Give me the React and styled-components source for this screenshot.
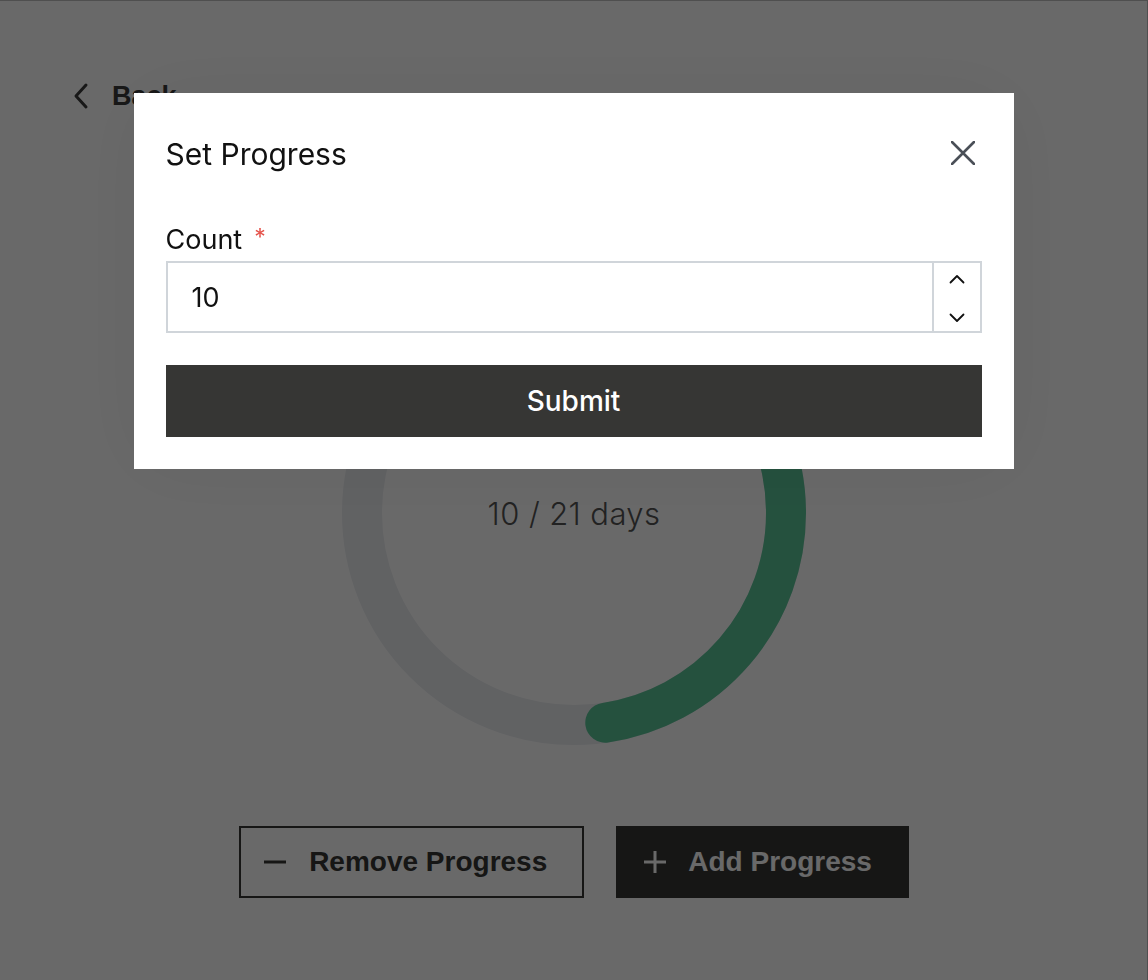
import React from "react";
import styled, { createGlobalStyle } from "styled-components";

const GlobalStyle = createGlobalStyle`
  html, body { margin: 0; padding: 0; background: #ffffff; }
  body { font-family: Inter, "Noto Sans", sans-serif; color: #111; }
  * { box-sizing: border-box; }
`;

const Page = styled.main`
  min-height: 980px;
  padding: 80px 72px 0;
  display: flex;
  flex-direction: column;
`;

const BackLink = styled.a`
  display: flex;
  align-items: center;
  gap: 22px;
  height: 32px;
  font-family: "Liberation Sans", Arial, sans-serif;
  font-weight: 700;
  font-size: 27px;
  color: #3a3a3a;
  text-decoration: none;
`;

const RingWrap = styled.div`
  position: relative;
  align-self: center;
  width: 464px;
  height: 464px;
  margin-top: 169px;
`;

const RingLabel = styled.div`
  position: absolute;
  inset: 0;
  display: flex;
  align-items: center;
  justify-content: center;
  font-family: Inter, sans-serif;
  font-weight: 300;
  font-size: 31px;
  letter-spacing: 0.4px;
  color: #535353;
`;

const ActionRow = styled.div`
  display: flex;
  justify-content: center;
  gap: 32px;
  margin-top: 81px;
`;

const ActionButton = styled.button`
  display: flex;
  align-items: center;
  gap: ${(p) => (p.$filled ? "21px" : "22px")};
  height: 72px;
  padding: ${(p) => (p.$filled ? "0 35px 0 25px" : "0 35px 0 22px")};
  font-family: "Liberation Sans", Arial, sans-serif;
  font-weight: 700;
  font-size: 28px;
  border: 2px solid #363634;
  background: ${(p) => (p.$filled ? "#363634" : "#ffffff")};
  color: ${(p) => (p.$filled ? "#ffffff" : "#363634")};
  cursor: pointer;
`;

const Overlay = styled.div`
  position: fixed;
  inset: 0;
  background: rgba(0, 0, 0, 0.59);
  border-top: 1px solid rgba(0, 0, 0, 0.25);
  border-right: 1px solid rgba(0, 0, 0, 0.25);
  display: flex;
  justify-content: center;
  align-items: flex-start;
  padding-top: 92px;
`;

const Modal = styled.div`
  width: 880px;
  background: #ffffff;
  padding: 32px 32px 32px;
  box-shadow: 0 0 80px rgba(0, 0, 0, 0.06);
  display: flex;
  flex-direction: column;
`;

const ModalHeader = styled.div`
  height: 58px;
  display: flex;
  align-items: center;
  justify-content: space-between;
`;

const ModalTitle = styled.h2`
  margin: 0;
  font-family: Inter, sans-serif;
  font-weight: 400;
  font-size: 30px;
  color: #111;
`;

const CloseButton = styled.button`
  border: 0;
  background: none;
  padding: 0;
  margin-right: 6px;
  margin-bottom: 2px;
  width: 26px;
  height: 26px;
  display: flex;
  align-items: center;
  justify-content: center;
  cursor: pointer;
`;

const Label = styled.label`
  margin-top: 40px;
  height: 32px;
  display: flex;
  align-items: center;
  gap: 12px;
  font-family: Inter, sans-serif;
  font-size: 27px;
  color: #111;
`;

const Required = styled.span`
  color: #e5534b;
  font-size: 23px;
  align-self: flex-start;
`;

const InputBox = styled.div`
  margin-top: 6px;
  height: 72px;
  border: 2px solid #d0d5da;
  display: flex;
`;

const NumberInput = styled.input`
  flex: 1;
  border: 0;
  outline: none;
  padding: 0 0 0 24px;
  font-family: Inter, sans-serif;
  font-size: 27px;
  color: #111;
  background: transparent;
`;

const Spinner = styled.div`
  width: 48px;
  border-left: 2px solid #d0d5da;
  display: flex;
  flex-direction: column;
  align-items: center;
  justify-content: space-between;
  padding: 7px 0 4px;
`;

const SpinButton = styled.button`
  border: 0;
  background: none;
  padding: 0;
  width: 30px;
  height: 18px;
  display: flex;
  align-items: center;
  justify-content: center;
  cursor: pointer;
`;

const SubmitButton = styled.button`
  margin-top: 32px;
  height: 72px;
  border: 0;
  background: #363634;
  color: #ffffff;
  font-family: Inter, sans-serif;
  font-weight: 500;
  font-size: 28px;
  cursor: pointer;
`;

function Ring({ value, total }) {
  const size = 464;
  const stroke = 40;
  const r = (size - stroke) / 2;
  const c = 2 * Math.PI * r;
  const frac = value / total;
  return (
    <svg width={size} height={size} viewBox={`0 0 ${size} ${size}`}>
      <circle cx={size / 2} cy={size / 2} r={r} fill="none" stroke="#ebedf1" strokeWidth={stroke} />
      <circle
        cx={size / 2}
        cy={size / 2}
        r={r}
        fill="none"
        stroke="#5bc498"
        strokeWidth={stroke}
        strokeLinecap="round"
        strokeDasharray={`${c * frac} ${c}`}
        transform={`rotate(-90 ${size / 2} ${size / 2})`}
      />
    </svg>
  );
}

export default function App() {
  return (
    <>
      <GlobalStyle />
      <Page>
        <BackLink href="#">
          <svg width="18" height="28" viewBox="0 0 18 28" fill="none">
            <path d="M14 3 L4 14 L14 25" stroke="#3a3a3a" strokeWidth="3" strokeLinecap="round" strokeLinejoin="round" />
          </svg>
          Back
        </BackLink>
        <RingWrap>
          <Ring value={10} total={21} />
          <RingLabel>10 / 21 days</RingLabel>
        </RingWrap>
        <ActionRow>
          <ActionButton>
            <svg width="24" height="24" viewBox="0 0 24 24">
              <path d="M1 12 H23" stroke="#363634" strokeWidth="3" />
            </svg>
            Remove Progress
          </ActionButton>
          <ActionButton $filled>
            <svg width="24" height="24" viewBox="0 0 24 24">
              <path d="M1 12 H23 M12 1 V23" stroke="#ffffff" strokeWidth="3" />
            </svg>
            Add Progress
          </ActionButton>
        </ActionRow>
      </Page>
      <Overlay>
        <Modal>
          <ModalHeader>
            <ModalTitle>Set Progress</ModalTitle>
            <CloseButton aria-label="Close">
              <svg width="24" height="24" viewBox="0 0 24 24">
                <path d="M1 1 L23 23 M23 1 L1 23" stroke="#4a4f57" strokeWidth="2.6" strokeLinecap="round" />
              </svg>
            </CloseButton>
          </ModalHeader>
          <Label>
            Count <Required>*</Required>
          </Label>
          <InputBox>
            <NumberInput type="text" defaultValue="10" />
            <Spinner>
              <SpinButton aria-label="Increase">
                <svg width="16" height="10" viewBox="0 0 16 10">
                  <path d="M1.5 8.5 L8 2 L14.5 8.5" fill="none" stroke="#111" strokeWidth="1.8" strokeLinecap="round" strokeLinejoin="round" />
                </svg>
              </SpinButton>
              <SpinButton aria-label="Decrease">
                <svg width="16" height="10" viewBox="0 0 16 10">
                  <path d="M1.5 1.5 L8 8 L14.5 1.5" fill="none" stroke="#111" strokeWidth="1.8" strokeLinecap="round" strokeLinejoin="round" />
                </svg>
              </SpinButton>
            </Spinner>
          </InputBox>
          <SubmitButton>Submit</SubmitButton>
        </Modal>
      </Overlay>
    </>
  );
}
